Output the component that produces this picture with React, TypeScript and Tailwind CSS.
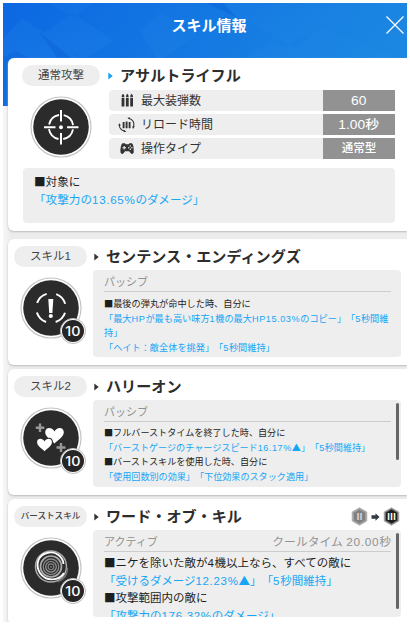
import type { ReactNode } from "react";
import clsx from "clsx";

const STATS = [
  { label: "最大装弾数", value: "60", icon: <BulletsIcon /> },
  { label: "リロード時間", value: "1.00秒", icon: <ReloadIcon /> },
  { label: "操作タイプ", value: "通常型", icon: <GamepadIcon /> }
];

function BulletsIcon() {
  return (
    <svg width="22" height="16" viewBox="0 0 22 16" fill="#333">
      {[5.6, 9.9, 14.2].map((x) => (
        <g key={x}>
          <path d={`M${x} 4.2Q${x} 1.4 ${x + 1.4} .8Q${x + 2.8} 1.4 ${x + 2.8} 4.2Z`} />
          <path d={`M${x} 5h2.8v8.6h-2.8z`} />
        </g>
      ))}
    </svg>
  );
}

function ReloadIcon() {
  return (
    <svg width="22" height="16" viewBox="0 0 22 16" fill="none" stroke="#333" strokeWidth="1.1">
      <path d="M7.6 5v6.200M10.6 4.400v6.800M13.6 5v6.200" strokeWidth="1.900" />
      <path d="M12.500 1.300C17 2 19 6.500 17.400 10M8.800 14.200C5 13.300 3 10.500 3.600 7.500" />
      <path d="M11.400 .8l2.800-.4-.8 2.200zM2 8.500l1.500-2.200 1.300 2.300zM18.800 9.300l-1.700 2.600-1-2.400zM7.800 12.800l2.600 1.600-2.500.8z" fill="#333" stroke="none" />
    </svg>
  );
}

function GamepadIcon() {
  return (
    <svg width="22" height="16" viewBox="0 0 22 16">
      <path
        d="M6.500 2.300h2.500l.8 1h2.800l.8-1h2.500c1.300.5 2.100 5.500 1.800 8.800-.1 2.200-2.200 2.200-3.200.9l-1.300-1.700H9l-1.300 1.700c-1 1.300-3.100 1.300-3.200-.9C4.200 7.800 5.200 2.800 6.500 2.300z"
        fill="#333"
      />
      <path d="M8.200 4.900v3.600M6.400 6.700h3.600" stroke="#eee" strokeWidth="1.100" />
      <g fill="#eee">
        <circle cx="14.300" cy="5.100" r=".75" />
        <circle cx="14.300" cy="8.300" r=".75" />
        <circle cx="12.700" cy="6.700" r=".75" />
        <circle cx="15.900" cy="6.700" r=".75" />
      </g>
    </svg>
  );
}

function CrosshairArt() {
  return (
    <g fill="none" stroke="#fff">
      <circle cx="31" cy="31" r="12.200" strokeWidth="1.900" strokeDasharray="14.360 4.800" strokeDashoffset="-2.400" />
      <path d="M31 14v11.500M31 37v11.500M14 31.300h11.500M37 31.300h11.500" strokeWidth="2" />
      <circle cx="31" cy="31.300" r="2" fill="#fff" stroke="none" />
    </g>
  );
}

function AlertArt() {
  return (
    <g fill="none" stroke="#fff">
      <circle cx="31" cy="31" r="14.800" strokeWidth="2" strokeDasharray="13.500 9.748" strokeDashoffset="-4.870" />
      <path d="M28.300 22h5l-.9 14h-3.200z" fill="#fff" stroke="none" />
      <circle cx="30.800" cy="39" r="2.100" fill="#fff" stroke="none" />
    </g>
  );
}

function HeartsArt() {
  const heart = "M0 4.500C-2-.2-9.300-.5-9.300 5.300-9.300 10-3 13.500 0 16.500 3 13.500 9.300 10 9.300 5.300 9.300-.5 2-.2 0 4.500z";
  return (
    <g>
      <path d="M20 16.500v8.500M15.800 20.700h8.500M41 36v9M36.500 40.500h9" stroke="#999" strokeWidth="2.400" />
      <path d={heart} transform="translate(34.500 20)" fill="#fff" />
      <path d={heart} transform="translate(24.500 31) scale(.8)" fill="#fff" stroke="#2b2b2b" strokeWidth="2.500" paintOrder="stroke" />
    </g>
  );
}

function SpiralArt() {
  return (
    <g fill="none">
      <circle cx="31" cy="29.500" r="15.500" stroke="#aaa" strokeWidth="1.500" />
      <path d="M44 36c-5 8-18 9-24 0-5-8-2-18 7-20 9-2.500 16 4 16.500 11" stroke="#fff" strokeWidth="1.900" />
      <path d="M47.500 31c0 7-4 12-10 14" stroke="#777" strokeWidth="1.300" />
      <circle cx="31" cy="29.500" r="10.500" stroke="#aaa" strokeWidth="1.700" />
      <circle cx="31" cy="29.800" r="7.800" stroke="#888" strokeWidth="1.300" />
      <circle cx="31" cy="29.800" r="5.300" stroke="#999" strokeWidth="1.200" />
      <circle cx="31" cy="29.800" r="2.900" stroke="#888" strokeWidth="1.100" />
      <circle cx="31" cy="29.800" r=".9" fill="#888" />
    </g>
  );
}

function SkillIcon({ level, children }: { level?: string; children: ReactNode }) {
  return (
    <div className="relative size-[62px]">
      <svg width="62" height="62" viewBox="0 0 62 62">
        <circle cx="31" cy="31" r="30" fill="#fff" stroke="#c4c4c4" strokeWidth="1.200" />
        <circle cx="31" cy="31" r="27.800" fill="#2b2b2b" />
        {children}
      </svg>
      {level && (
        <div className="absolute -right-[4px] -bottom-[5px] flex size-[26px] items-center justify-center rounded-full border border-[#bbb] bg-white">
          <div className="flex size-[22px] items-center justify-center rounded-full bg-[#262626]">
            <span className="scale-x-110 font-['Inter'] text-[13px] leading-none font-medium text-white">{level}</span>
          </div>
        </div>
      )}
    </div>
  );
}

function Hexagon({ numeral, dim }: { numeral: string; dim?: boolean }) {
  return (
    <svg width="17" height="19" viewBox="0 0 17 19">
      <path d="M8.500.8l7.300 4.200v9l-7.300 4.200L1.200 14V5z" fill={dim ? "#a2a2a2" : "#777"} stroke="#aaa" strokeWidth=".8" />
      <path d="M8.500 2.600l5.600 3.200v7.400l-5.600 3.200-5.600-3.200V5.800z" fill={dim ? "#808080" : "#1c1c1c"} />
      <text x="8.500" y="12.700" textAnchor="middle" fill={dim ? "#ddd" : "#fff"} className="font-['Noto_Sans_CJK_JP',sans-serif] text-[9px] font-bold">
        {numeral}
      </text>
    </svg>
  );
}

function CardTitle({ tag, title, blue, right, small }: { tag: string; title: string; blue?: boolean; right?: ReactNode; small?: boolean }) {
  return (
    <div className="flex h-[21px] items-center">
      <div
        className={clsx(
          "flex h-[21px] shrink-0 items-center justify-center rounded-full bg-[#eee] whitespace-nowrap text-[#444]",
          blue ? "w-[78px]" : "w-[73px]",
          small ? "text-[8.600px] font-medium" : "text-[11.500px]"
        )}
      >
        {tag}
      </div>
      <svg width="5" height="8" viewBox="0 0 5 8" className={blue ? "mr-[7px] ml-2" : "mr-[7px] ml-[7px]"}>
        <path d="M.3.600l4.400 3.400-4.400 3.400z" fill={blue ? "#15a3f2" : "#333"} />
      </svg>
      <h2 className="text-[15.1px] leading-[21px] font-bold whitespace-nowrap text-[#2d2d2d]">{title}</h2>
      {right && <div className="mr-[7px] ml-auto flex items-center gap-[3px]">{right}</div>}
    </div>
  );
}

// Squares and triangles take the full-width glyphs of the Japanese font,
// digits and latin letters are set a little wider.
function Mixed({ text }: { text: string }) {
  return text.split(/([■▲]|[A-Z0-9.%]+)/).map((part, i) => {
    if (/^[■▲]$/.test(part)) {
      return (
        <span key={i} className="font-['Noto_Sans_CJK_JP',sans-serif] leading-none">
          {part}
        </span>
      );
    }
    if (/^[A-Z0-9.%]+$/.test(part)) {
      return (
        <span key={i} className="tracking-[0.06em]">
          {part}
        </span>
      );
    }
    return part;
  });
}

function Line({ text, effect }: { text: string; effect?: boolean }) {
  return (
    <p className={clsx("whitespace-nowrap", effect ? "text-[#16a6f5]" : "text-[#1e1e1e]")}>
      <Mixed text={text} />
    </p>
  );
}

function SkillBox({ kind, cooldown, thumb, children }: { kind: string; cooldown?: string; thumb?: string; children: ReactNode }) {
  return (
    <div className="relative h-[87px] w-[308px] overflow-hidden rounded bg-[#eee] pr-[10px] pl-[11px]">
      <div className="flex h-[22px] items-center justify-between border-b border-[#ccc] pt-[4px] text-[11px] text-[#929292]">
        <span>{kind}</span>
        {cooldown && (
          <span className="text-[11.800px] whitespace-nowrap">
            <Mixed text={cooldown} />
          </span>
        )}
      </div>
      {children}
      {thumb && <div className={clsx("absolute top-[3px] right-[2px] w-[3px] rounded-full bg-[#666]", thumb)} />}
    </div>
  );
}

function SkillCard({ header, art, children }: { header: ReactNode; art: ReactNode; children: ReactNode }) {
  return (
    <section className="h-[126px] shrink-0 rounded-l-md bg-white pt-[7px] pl-[6px] shadow-[0_1px_2px_#bbb]">
      {header}
      <div className="mt-[3px] flex">
        <div className="w-[79px] shrink-0 pt-[7px] pl-[6px]">
          <SkillIcon level="10">{art}</SkillIcon>
        </div>
        {children}
      </div>
    </section>
  );
}

export default function App() {
  return (
    <div className="h-[624px] w-[410px] overflow-hidden bg-white p-[3px] font-['Liberation_Sans','Noto_Sans_CJK_JP',sans-serif] [text-spacing-trim:space-all]">
      <div className="relative h-[619px] w-[404px] overflow-hidden bg-linear-to-r from-[#f7f7f7] via-[#ececec] via-2% to-[#ededed]">
        <svg width="404" height="103" viewBox="0 0 404 103" className="absolute top-0 left-0">
          <defs>
            <linearGradient id="sky" x1="0" x2="1" y1="0" y2=".2">
              <stop stopColor="#0c68e2" />
              <stop offset="1" stopColor="#1b87e2" />
            </linearGradient>
            <linearGradient id="fold" x1="0" x2="1" y1="1" y2="0">
              <stop stopColor="#2d91eb" stopOpacity=".22" />
              <stop offset="1" stopColor="#2d91eb" stopOpacity="0" />
            </linearGradient>
          </defs>
          <path d="M0 0h404v103H0z" fill="url(#sky)" />
          <path d="M0 36L19 15l62 43H0zM45 0l25 14L90 0zM38 32l32-22 40 28-28 18zM137 27l22-18 34 24-38 25zM214 0l80 46L345 0zM238 58l30-20 18 8-16 12zM262 58l52-36 90 36z" fill="url(#fold)" />
          <path d="M36 29l35 28H56zM203 0l30 14L221 0z" fill="#0755d0" opacity=".3" />
          <path d="M0 54l13-6 18 10H0z" fill="#0755d0" opacity=".25" />
        </svg>

        <header className="relative flex h-[55px] items-center justify-center">
          <h1 className="pb-[11px] pl-[8px] text-[15px] leading-none font-bold text-white">スキル情報</h1>
          <svg width="20" height="20" viewBox="0 0 20 20" className="absolute top-[12px] right-[2px]" stroke="#fff" strokeWidth="1.200">
            <path d="M1.500 1.500l17 17M18.500 1.500l-17 17" />
          </svg>
        </header>

        <main className="relative flex flex-col pl-[5px]">
          <section className="h-[173px] shrink-0 rounded-l-md bg-white pt-[7px] pl-[14px] shadow-[0_1px_2px_#bbb]">
            <CardTitle tag="通常攻撃" title="アサルトライフル" blue />
            <div className="mt-[4px] flex">
              <div className="w-[87px] shrink-0 pt-[6px] pl-[8px]">
                <SkillIcon>
                  <CrosshairArt />
                </SkillIcon>
              </div>
              <div className="flex flex-col gap-[3px]">
                {STATS.map((stat) => (
                  <div key={stat.label} className="flex h-[21px] w-[286px] overflow-hidden rounded-l-sm bg-[#eee]">
                    <div className="flex flex-1 items-center gap-[3px] pl-[7px] text-[12px] text-[#333]">
                      {stat.icon}
                      {stat.label}
                    </div>
                    <div className="flex w-[72px] items-center justify-center bg-[#929292] text-white">
                      <span className={clsx("font-medium", stat.value === "通常型" ? "text-[11.500px]" : "scale-x-[1.15] text-[12px]")}>{stat.value}</span>
                    </div>
                  </div>
                ))}
              </div>
            </div>
            <div className="mt-[9px] ml-[1px] h-[55px] w-[372px] rounded bg-[#eee] pt-[5px] pl-[11px] text-[11.600px] leading-[17.5px]">
              <Line text="■対象に" />
              <Line text="「攻撃力の13.65%のダメージ」" effect />
            </div>
          </section>

          <div className="mt-[8px] flex flex-col gap-[4px]">
            <SkillCard header={<CardTitle tag="スキル1" title="センテンス・エンディングズ" />} art={<AlertArt />}>
              <SkillBox kind="パッシブ">
                <div className="pt-[5px] text-[9.180px] leading-[14.600px]">
                  <Line text="■最後の弾丸が命中した時、自分に" />
                  <Line text="「最大HPが最も高い味方1機の最大HP15.03%のコピー」「5秒間維" effect />
                  <Line text="持」" effect />
                  <Line text="「ヘイト：敵全体を挑発」「5秒間維持」" effect />
                </div>
              </SkillBox>
            </SkillCard>

            <SkillCard header={<CardTitle tag="スキル2" title="ハリーオン" />} art={<HeartsArt />}>
              <SkillBox kind="パッシブ" thumb="h-[57px]">
                <div className="pt-[4px] text-[9.100px] leading-[14.600px]">
                  <Line text="■フルバーストタイムを終了した時、自分に" />
                  <Line text="「バーストゲージのチャージスピード16.17%▲」「5秒間維持」" effect />
                  <Line text="■バーストスキルを使用した時、自分に" />
                  <Line text="「使用回数別の効果」「下位効果のスタック適用」" effect />
                </div>
              </SkillBox>
            </SkillCard>

            <SkillCard
              header={
                <CardTitle
                  tag="バーストスキル"
                  title="ワード・オブ・キル"
                  small
                  right={
                    <>
                      <Hexagon numeral="Ⅱ" dim />
                      <svg width="9" height="8" viewBox="0 0 9 8">
                        <path d="M.5 2.300h4V.3L8.500 4l-4 3.700v-2h-4z" fill="#333b45" />
                      </svg>
                      <Hexagon numeral="Ⅲ" />
                    </>
                  }
                />
              }
              art={<SpiralArt />}
            >
              <SkillBox kind="アクティブ" cooldown="クールタイム 20.00秒" thumb="h-[76px]">
                <div className="pt-[3px] text-[11.500px] leading-[17.700px]">
                  <Line text="■ニケを除いた敵が4機以上なら、すべての敵に" />
                  <Line text="「受けるダメージ12.23%▲」「5秒間維持」" effect />
                  <Line text="■攻撃範囲内の敵に" />
                  <Line text="「攻撃力の176.32%のダメージ」" effect />
                </div>
              </SkillBox>
            </SkillCard>
          </div>
        </main>
      </div>
    </div>
  );
}
